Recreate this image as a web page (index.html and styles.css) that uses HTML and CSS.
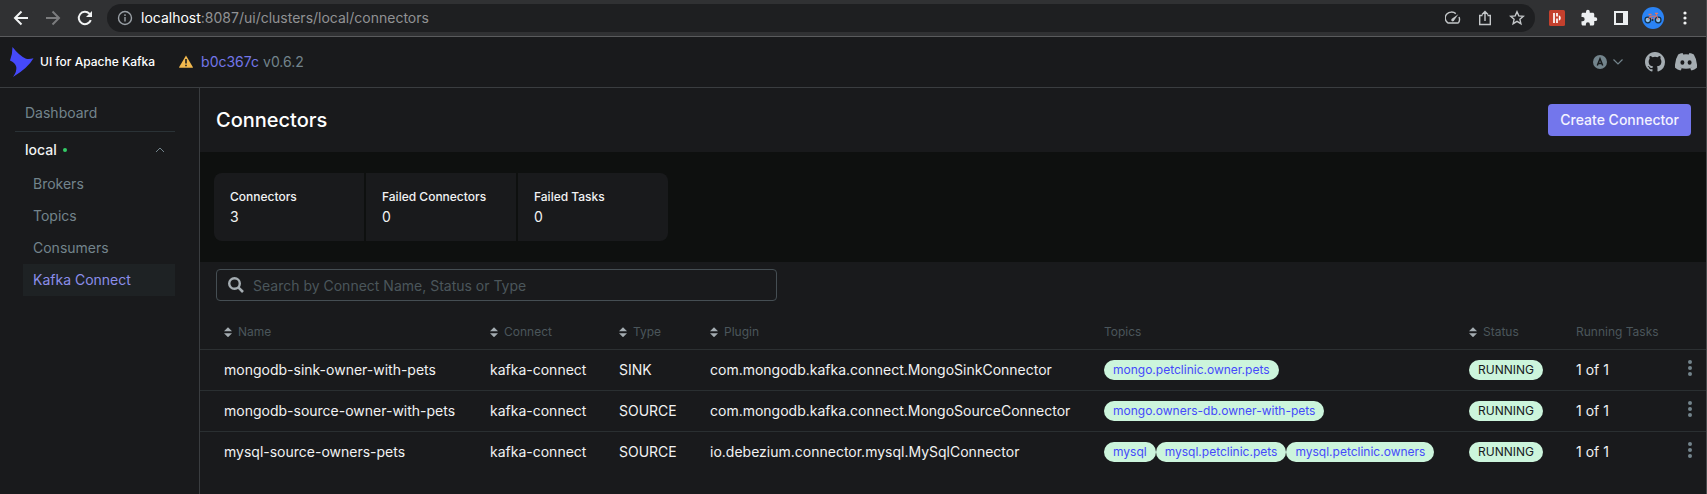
FILE: index.html
```html
<!DOCTYPE html>
<html lang="en">
<head>
<meta charset="utf-8">
<meta name="viewport" content="width=device-width, initial-scale=1">
<title>UI for Apache Kafka</title>
<link rel="stylesheet" href="styles.css">
</head>
<body>
<div class="browser">
  <button class="tool" aria-label="Back"><svg width="16" height="16" viewBox="0 0 16 16" fill="none" stroke="#f1f3f4" stroke-width="2"><path d="M15 8H2.5M8.5 1.5 2 8l6.500 6.500"/></svg></button>
  <button class="tool" aria-label="Forward"><svg width="16" height="16" viewBox="0 0 16 16" fill="none" stroke="#7b7c7e" stroke-width="2"><path d="M1 8h12.500M7.500 1.500 14 8l-6.500 6.500"/></svg></button>
  <button class="tool" aria-label="Reload"><svg width="16" height="16" viewBox="0 0 16 16" fill="none" stroke="#f1f3f4" stroke-width="2"><path d="M13.800 10.200A6.200 6.200 0 1 1 12.400 3.600L14 5.200"/><path d="M15 1v6H9z" fill="#f1f3f4" stroke="none"/></svg></button>
  <div class="address">
    <svg width="16" height="16" viewBox="0 0 16 16" fill="none" stroke="#9aa0a6" stroke-width="1.400"><circle cx="8" cy="8" r="6.500"/><path d="M8 7v4.500M8 4.300v1.700"/></svg>
    <span class="url"><span class="host">localhost</span>:8087/ui/clusters/local/connectors</span>
    <button class="tool" aria-label="Performance"><svg width="16" height="16" viewBox="0 0 16 16" fill="none" stroke="#c4c7c9" stroke-width="1.400"><path d="M10.800 3.600A6.200 5.800 0 0 0 2.300 12.400q.4.600 1 .6h9.400q.6 0 1-.6a6 6 0 0 0 .3-5.400"/><path d="M13.300 4.300 9.200 10.300A1.500 1.500 0 1 1 7.200 8.500z" fill="#c4c7c9" stroke="none"/></svg></button>
    <button class="tool" aria-label="Share"><svg width="16" height="16" viewBox="0 0 16 16" fill="none" stroke="#c4c7c9" stroke-width="1.400"><path d="M5.500 5.500h-2.800v9h10.600v-9h-2.800M8 11V1.800M5 4.500l3-3 3 3"/></svg></button>
    <button class="tool" aria-label="Bookmark"><svg width="16" height="16" viewBox="0 0 16 16" fill="none" stroke="#c4c7c9" stroke-width="1.400"><path d="m8 1.800 1.800 4.100 4.500.4-3.400 3 1 4.400L8 11.400l-3.900 2.300 1-4.400-3.400-3 4.500-.4z"/></svg></button>
  </div>
  <button class="tool" aria-label="Recorder extension"><svg width="16" height="16" viewBox="0 0 16 16"><rect width="16" height="16" rx="1.500" fill="#c4402d"/><path d="M5 3v10M8 3v3.500M8 8.500V13" stroke="#fff" stroke-width="1.700"/><path d="M9.800 5.200q2 .6 2 2.800t-2 2.800z" fill="#fff"/></svg></button>
  <button class="tool" aria-label="Extensions"><svg width="18" height="18" viewBox="0 0 24 24" fill="#eceff1"><path d="M20.500 11H19V7c0-1.100-.9-2-2-2h-4V3.500a2.500 2.500 0 0 0-5 0V5H4c-1.100 0-2 .9-2 2v3.800h1.500a2.700 2.700 0 0 1 0 5.400H2V20c0 1.100.9 2 2 2h3.800v-1.500a2.700 2.700 0 0 1 5.400 0V22H17c1.100 0 2-.9 2-2v-4h1.500a2.500 2.500 0 0 0 0-5z"/></svg></button>
  <button class="tool" aria-label="Side panel"><svg width="14" height="14" viewBox="0 0 14 14"><path fill="#eceff1" fill-rule="evenodd" d="M0 0h14v14H0zM2 2v10h7V2z"/></svg></button>
  <button class="tool" aria-label="Profile"><svg width="22" height="22" viewBox="0 0 22 22" fill="none"><circle cx="11" cy="11" r="11" fill="#2a83f5"/><g stroke="#16324a" stroke-width="1.300"><circle cx="5.800" cy="13" r="2.800" fill="#8fc4ee"/><circle cx="16.200" cy="13" r="2.800" fill="#8fc4ee"/></g><path d="M5.800 13 8 9.200h6L10.500 13 8 9.200M14 6.500l2.200 6.500" stroke="#e8735c"/><path d="M6.500 7.300h3M13 6.300h3" stroke="#e8735c" stroke-width="1.300"/><circle cx="10.500" cy="13" r="1" fill="#16324a"/></svg></button>
  <button class="tool" aria-label="Browser menu"><svg width="4" height="14" viewBox="0 0 4 14" fill="#f1f3f4"><circle cx="2" cy="2" r="1.600"/><circle cx="2" cy="7" r="1.600"/><circle cx="2" cy="12" r="1.600"/></svg></button>
</div>

<header class="navbar">
  <a class="brand" href="#">
    <svg width="24" height="30" viewBox="0 0 24 30" fill="#4549fb"><path d="M2.500 0Q9 8.500 16 11.800q3.500.8 7.500-.5Q18 21 3 30q4-5.500 3.300-10Q5.300 15.500 0 13.500 2.500 7 2.500 0z"/></svg>
    <span>UI for Apache Kafka</span>
  </a>
  <div class="version">
    <svg width="14" height="13" viewBox="0 0 14 13"><path d="M7 .4 13.800 12q.3.800-.5.800H.7q-.8 0-.5-.8z" fill="#f2b94e"/><path d="M7 4v4.500M7 9.700v1.600" stroke="#1b1c1e" stroke-width="1.600"/></svg>
    <a class="commit" href="#">b0c367c</a><span>v0.6.2</span>
  </div>
  <div class="nav-end">
    <button class="theme" aria-label="Theme"><svg width="14" height="14" viewBox="0 0 14 14"><circle cx="7" cy="7" r="7" fill="#73848c"/><path d="M4.300 10.500 7 3.800l2.700 6.700M5.200 8.400h3.600" fill="none" stroke="#171a1c" stroke-width="1.500"/></svg><svg width="10" height="6" viewBox="0 0 10 6" fill="none" stroke="#73848c" stroke-width="1.200"><path d="m.5.500 4.500 4.500L9.500.500"/></svg></button>
    <a class="social" href="#" aria-label="GitHub"><svg width="20" height="20" viewBox="0 0 16 16" fill="#a5adb2"><path d="M8 0C3.580 0 0 3.580 0 8c0 3.540 2.290 6.530 5.470 7.590.4.070.55-.17.55-.38 0-.19-.01-.82-.01-1.490-2.010.37-2.530-.49-2.690-.94-.09-.23-.48-.94-.82-1.130-.28-.15-.68-.52-.01-.53.63-.01 1.080.58 1.230.82.72 1.210 1.870.87 2.330.66.070-.52.28-.87.51-1.070-1.780-.2-3.640-.89-3.640-3.950 0-.87.31-1.590.82-2.150-.08-.2-.36-1.020.08-2.120 0 0 .67-.21 2.200.82a7.600 7.600 0 0 1 4 0c1.530-1.040 2.200-.82 2.200-.82.44 1.100.16 1.920.08 2.120.51.560.82 1.270.82 2.150 0 3.070-1.870 3.750-3.650 3.950.29.25.54.73.54 1.480 0 1.070-.01 1.930-.01 2.200 0 .21.15.46.55.38A8 8 0 0 0 16 8c0-4.420-3.580-8-8-8z"/></svg></a>
    <a class="social" href="#" aria-label="Discord"><svg width="22" height="18" viewBox="0 0 22 18" fill="#a5adb2" fill-rule="evenodd"><path d="M7.600 0 8.200 1.500q2.800-.4 5.600 0L14.400 0q2.500.4 4.400 1.500 3.800 6 3.100 13.200-2.400 2-5.400 2.900l-1.400-2.200q1-.3 1.900-.9-6 2.500-12 0 .9.600 1.900.9l-1.400 2.200q-3-.9-5.400-2.900-.7-7.200 3.100-13.200Q5.100.4 7.600 0zM7.400 7.300a2 2.200 0 1 0 0 4.400 2 2.200 0 1 0 0-4.400zm7.200 0a2 2.200 0 1 0 0 4.400 2 2.200 0 1 0 0-4.400z"/></svg></a>
  </div>
</header>

<div class="layout">
  <nav class="sidebar">
    <a class="side-top" href="#">Dashboard</a>
    <button class="cluster" aria-expanded="true"><span>local</span><i class="online"></i><svg width="10" height="6" viewBox="0 0 10 6" fill="none" stroke="#73848c"><path d="m1 5 4-4 4 4"/></svg></button>
    <ul class="side-list">
      <li><a href="#">Brokers</a></li>
      <li><a href="#">Topics</a></li>
      <li><a href="#">Consumers</a></li>
      <li><a class="active" href="#" aria-current="page">Kafka Connect</a></li>
    </ul>
  </nav>
  <main class="main">
    <div class="page-head">
      <h1>Connectors</h1>
      <button class="create">Create Connector</button>
    </div>
    <section class="metrics">
      <div class="metric"><div class="label">Connectors</div><div>3</div></div>
      <div class="metric"><div class="label">Failed Connectors</div><div>0</div></div>
      <div class="metric"><div class="label">Failed Tasks</div><div>0</div></div>
    </section>
    <label class="search">
      <svg width="16" height="16" viewBox="0 0 16 16" fill="none" stroke="#a5adb2"><circle cx="6.500" cy="6.500" r="5.300" stroke-width="2.400"/><path d="m10.300 10.300 4.700 4.700" stroke-width="2.600"/></svg>
      <input type="text" aria-label="Search connectors" placeholder="Search by Connect Name, Status or Type">
    </label>
    <table class="connectors">
      <colgroup><col class="c-name"><col class="c-connect"><col class="c-type"><col class="c-plugin"><col class="c-topics"><col class="c-status"><col class="c-tasks"><col></colgroup>
      <thead>
        <tr>
          <th><button class="sort">Name</button></th>
          <th><button class="sort">Connect</button></th>
          <th><button class="sort">Type</button></th>
          <th><button class="sort">Plugin</button></th>
          <th>Topics</th>
          <th><button class="sort">Status</button></th>
          <th>Running Tasks</th>
          <th></th>
        </tr>
      </thead>
      <tbody>
        <tr>
          <td>mongodb-sink-owner-with-pets</td><td>kafka-connect</td><td>SINK</td><td>com.mongodb.kafka.connect.MongoSinkConnector</td>
          <td><div class="tags"><a class="tag" href="#">mongo.petclinic.owner.pets</a></div></td>
          <td><div class="tags"><span class="tag status">RUNNING</span></div></td><td>1 of 1</td>
          <td><button class="more" aria-label="Actions"><svg width="4" height="16" viewBox="0 0 4 16"><circle cx="2" cy="2" r="2"/><circle cx="2" cy="8" r="2"/><circle cx="2" cy="14" r="2"/></svg></button></td>
        </tr>
        <tr>
          <td>mongodb-source-owner-with-pets</td><td>kafka-connect</td><td>SOURCE</td><td>com.mongodb.kafka.connect.MongoSourceConnector</td>
          <td><div class="tags"><a class="tag" href="#">mongo.owners-db.owner-with-pets</a></div></td>
          <td><div class="tags"><span class="tag status">RUNNING</span></div></td><td>1 of 1</td>
          <td><button class="more" aria-label="Actions"><svg width="4" height="16" viewBox="0 0 4 16"><circle cx="2" cy="2" r="2"/><circle cx="2" cy="8" r="2"/><circle cx="2" cy="14" r="2"/></svg></button></td>
        </tr>
        <tr>
          <td>mysql-source-owners-pets</td><td>kafka-connect</td><td>SOURCE</td><td>io.debezium.connector.mysql.MySqlConnector</td>
          <td><div class="tags"><a class="tag" href="#">mysql</a><a class="tag" href="#">mysql.petclinic.pets</a><a class="tag" href="#">mysql.petclinic.owners</a></div></td>
          <td><div class="tags"><span class="tag status">RUNNING</span></div></td><td>1 of 1</td>
          <td><button class="more" aria-label="Actions"><svg width="4" height="16" viewBox="0 0 4 16"><circle cx="2" cy="2" r="2"/><circle cx="2" cy="8" r="2"/><circle cx="2" cy="14" r="2"/></svg></button></td>
        </tr>
      </tbody>
    </table>
  </main>
</div>
</body>
</html>
```
FILE: styles.css
```css
* { box-sizing: border-box; }
body {
  margin: 0;
  min-height: 100vh;
  display: flex;
  flex-direction: column;
  border-right: 1px solid #4a4b4d;
  background: #191a1c;
  color: #f1f2f3;
  font: 14px/20px Inter, "Liberation Sans", sans-serif;
}
button, input { font: inherit; color: inherit; background: none; border: 0; padding: 0; }
button { cursor: pointer; }
a { color: inherit; text-decoration: none; }
svg { display: block; flex: none; }

.browser {
  display: flex;
  align-items: center;
  padding: 4px 5px 4px 5px;
  background: #303133;
  border-bottom: 1px solid #5a5b5d;
}
.tool { display: flex; align-items: center; justify-content: center; width: 32px; height: 28px; flex: none; }
.address {
  flex: 1;
  min-width: 0;
  display: flex;
  align-items: center;
  height: 28px;
  margin: 0 6px;
  padding: 0 2px 0 10px;
  border-radius: 14px;
  background: #1e1f21;
}
.url { flex: 1; min-width: 0; margin-left: 8px; overflow: hidden; white-space: nowrap; color: #919294; }
.host { color: #fff; }

.navbar {
  display: flex;
  align-items: center;
  height: 51px;
  padding: 0 9px 0 10px;
  border-bottom: 1px solid #3a3d40;
}
.brand { display: flex; align-items: center; gap: 6px; font-size: 12px; font-weight: 500; color: #fff; }
.version { display: flex; align-items: center; margin-left: 24px; color: #73848c; }
.version > svg { margin-bottom: 2px; }
.commit { margin: 0 4px 0 8px; color: #7376e8; }
.nav-end { display: flex; align-items: center; margin-left: auto; }
.theme { display: flex; align-items: center; gap: 6px; margin-right: 22px; }
.social + .social { margin-left: 10px; }

.layout { flex: 1; display: flex; }
.sidebar { flex: none; width: 200px; padding: 7px 24px 0 15px; border-right: 1px solid #3a3d40; color: #73848c; }
.side-top { display: block; padding: 8px 10px; border-bottom: 1px solid #2a3236; }
.cluster { display: flex; align-items: center; width: 100%; height: 36px; padding: 0 10px; color: #f1f2f3; font-weight: 500; }
.online { width: 4px; height: 4px; margin-left: 6px; border-radius: 50%; background: #33cc66; }
.cluster svg { margin-left: auto; }
.side-list { list-style: none; margin: 0; padding: 0 0 0 8px; }
.side-list a { display: block; padding: 6px 10px; }
.side-list .active { background: #1e2224; color: #8b8eea; }

.main { flex: 1; min-width: 0; }
.page-head { display: flex; align-items: center; justify-content: space-between; height: 64px; padding: 0 15px 0 16px; }
h1 { margin: 0; font-size: 20px; line-height: 32px; font-weight: 500; color: #fff; }
.create { height: 32px; padding: 0 12px; border-radius: 4px; background: #7376ec; color: #f3f3ff; font-weight: 500; }

.metrics { display: flex; gap: 2px; padding: 21px 14px; background: #0e100f; }
.metric { width: 150px; padding: 14px 16px; background: #191a1c; }
.metric:first-child { border-radius: 8px 0 0 8px; }
.metric:last-child { border-radius: 0 8px 8px 0; }
.label { font-size: 12px; font-weight: 500; white-space: nowrap; }

.search {
  display: flex;
  align-items: center;
  gap: 9px;
  width: 37.25%;
  min-width: 320px;
  height: 32px;
  margin: 7px 16px 0;
  padding: 0 11px;
  border: 1px solid #454e53;
  border-radius: 4px;
}
.search input { flex: 1; min-width: 0; padding-top: 2px; outline: 0; }
.search input::placeholder { color: #4b565b; opacity: 1; }

.connectors { width: 100%; margin-top: 15px; table-layout: fixed; border-collapse: collapse; white-space: nowrap; }
.c-name { width: 266px; }
.c-connect { width: 129px; }
.c-type { width: 91px; }
.c-plugin { width: 394px; }
.c-topics { width: 365px; }
.c-status { width: 107px; }
.c-tasks { width: 100px; }
th, td { padding: 0 0 0 24px; text-align: left; font-weight: 400; }
th { height: 33px; color: #4b565b; font-size: 12px; border-bottom: 1px solid #2c3032; }
td { height: 41px; }
tbody tr:not(:last-child) td { border-bottom: 1px solid #2a2f31; }
.sort { display: flex; align-items: center; gap: 6px; }
.sort::before {
  content: "";
  width: 8px;
  height: 10px;
  background: #a5adb2;
  clip-path: polygon(50% 0, 100% 40%, 0 40%, 0 60%, 100% 60%, 50% 100%, 0 60%, 0 40%);
}
.tags { display: flex; }
.tag { padding: 0 9px; border-radius: 10px; background: #ccf5dc; color: #4549fb; font-size: 12px; }
.status { color: #171a1c; }
.more { display: block; margin: 0 14px 4px auto; }
.more svg { fill: #73848c; }
```
